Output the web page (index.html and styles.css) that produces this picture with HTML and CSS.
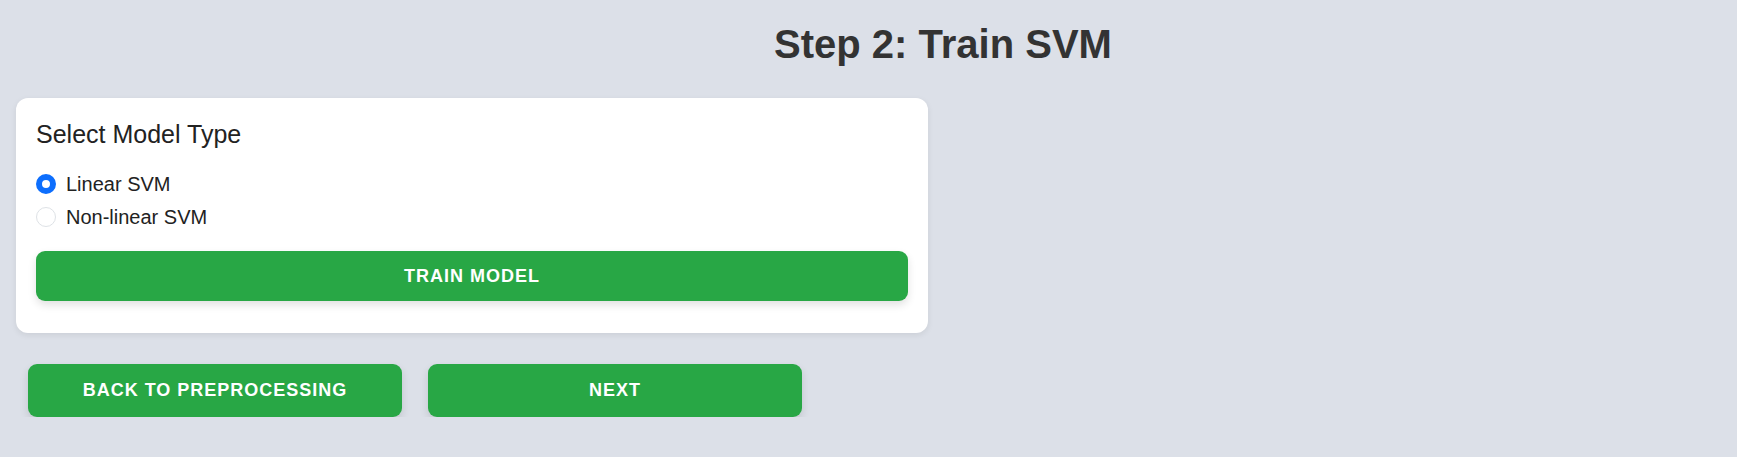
FILE: index.html
```html
<!DOCTYPE html>
<html lang="en">
<head>
<meta charset="utf-8">
<title>Step 2: Train SVM</title>
<link rel="stylesheet" href="styles.css">
</head>
<body>
<div class="page">
  <h1 class="title">Step 2: Train SVM</h1>
  <section class="card">
    <h2 class="card-title">Select Model Type</h2>
    <div class="options">
      <label class="option"><input type="radio" name="model" class="radio" checked><span>Linear SVM</span></label>
      <label class="option"><input type="radio" name="model" class="radio"><span>Non-linear SVM</span></label>
    </div>
    <button class="btn btn-wide">TRAIN MODEL</button>
  </section>
  <div class="nav">
    <button class="btn btn-nav">BACK TO PREPROCESSING</button>
    <button class="btn btn-nav">NEXT</button>
  </div>
</div>
</body>
</html>
```
FILE: styles.css
```css
* { box-sizing: border-box; }
html, body { margin: 0; padding: 0; }
body {
  background: #dce0e8;
  font-family: "Liberation Sans", Arial, sans-serif;
  color: #222;
}
.page {
  padding: 22px 16px 0 16px;
}
.title {
  margin: 0 0 31px 0;
  padding-left: 149px;
  text-align: center;
  font-size: 40px;
  font-weight: bold;
  color: #333;
}
.card {
  width: 912px;
  background: #fff;
  border-radius: 12px;
  padding: 22px 20px 32px 20px;
  box-shadow: 0 2px 6px rgba(0, 0, 0, 0.08);
}
.card-title {
  margin: 0 0 24px 0;
  font-size: 25px;
  font-weight: normal;
  color: #222;
  line-height: 28.75px;
}
.options {
  display: flex;
  flex-direction: column;
  gap: 10px;
  margin-bottom: 22px;
}
.option {
  display: flex;
  align-items: center;
  gap: 10px;
  font-size: 20px;
  line-height: 23px;
  color: #222;
}
.radio {
  appearance: none;
  -webkit-appearance: none;
  margin: 0;
  width: 20px;
  height: 20px;
  border-radius: 50%;
  border: 1px solid #dee2e6;
  background: #fff;
}
.radio:checked {
  border: 6px solid #0d6efd;
}
.btn {
  display: block;
  border: none;
  background: #28a745;
  color: #fff;
  font-family: "Liberation Sans", Arial, sans-serif;
  font-weight: bold;
  font-size: 18px;
  letter-spacing: 1px;
  line-height: 20.7px;
  border-radius: 9px;
  box-shadow: 0 4px 8px rgba(0, 0, 0, 0.12);
}
.btn-wide {
  width: 100%;
  padding: 15px 0;
}
.nav {
  display: flex;
  gap: 26px;
  padding: 31px 12px 0 12px;
}
.btn-nav {
  width: 374px;
  padding: 16px 0;
}
```
